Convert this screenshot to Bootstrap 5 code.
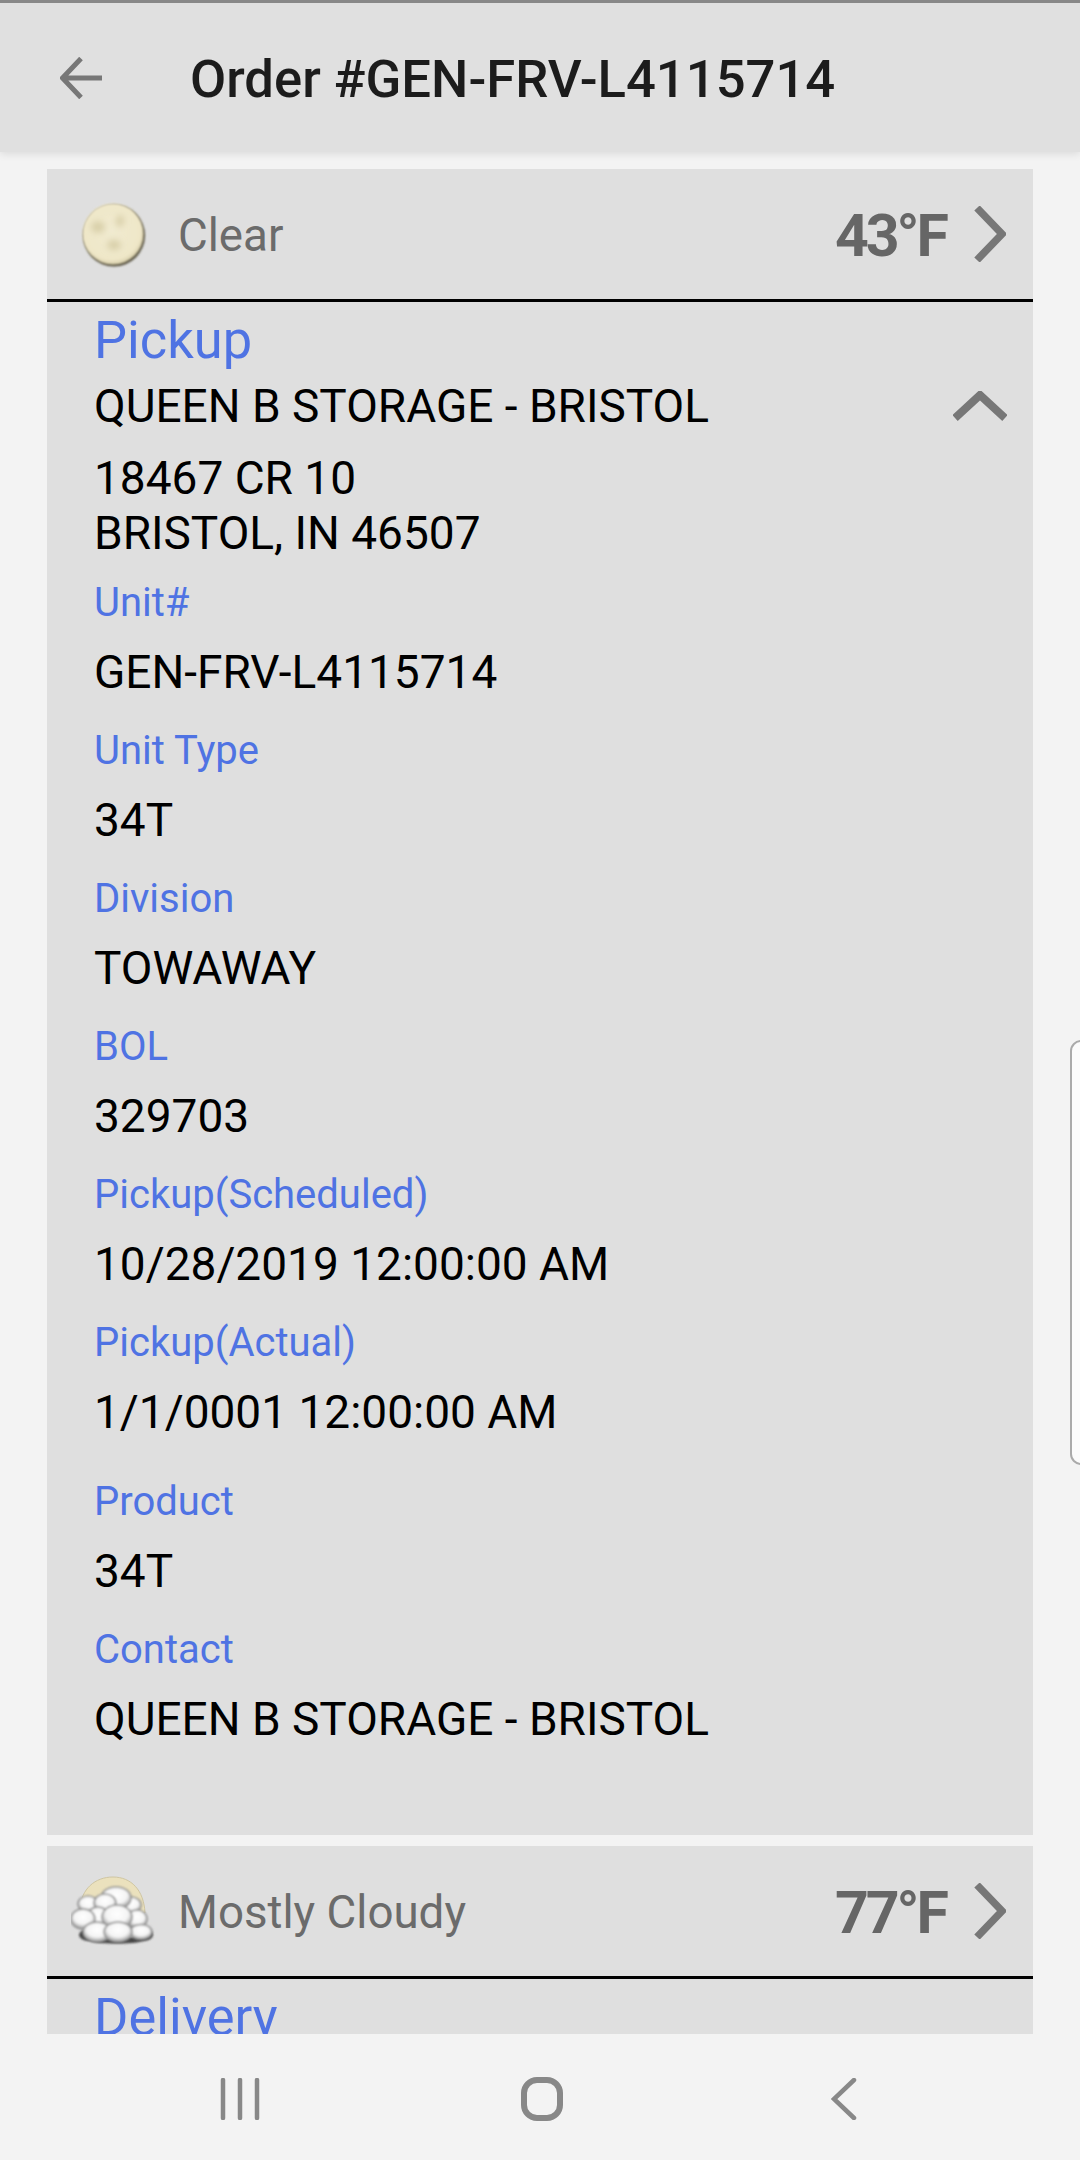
<!DOCTYPE html>
<html lang="en">
<head>
<meta charset="utf-8">
<title>Order</title>
<link href="https://cdn.jsdelivr.net/npm/bootstrap@5.3.0/dist/css/bootstrap.min.css" rel="stylesheet">
<style>
html,body{height:2160px;overflow:hidden;}
body{background:#f3f3f3;font-family:Roboto,"Liberation Sans",sans-serif;color:#000;}
.app-shell{height:2160px;}
.app-top{height:152px;background:#e0e0e0;border-top:3px solid #888;box-shadow:0 2px 8px rgba(0,0,0,.1);padding-left:60px;padding-top:3px;z-index:2;}
.app-top svg{margin-top:-3px;}
.app-title{font-size:52.6px;font-weight:500;color:#1c1c1c;margin:0 0 0 88px;line-height:1;}
.app-scroll{height:1882px;overflow:hidden;padding:17px 47px 0;}
.stop-card{background:#dfdfdf;margin-bottom:11px;}
.wx-row{height:133px;border-bottom:3px solid #000;padding-right:27px;}
.wx-icon{width:132px;flex:none;}
.wx-name{font-size:45.7px;color:#6b6b6b;line-height:1;margin-left:-1px;padding-top:3px;}
.wx-temp{font-size:59px;font-weight:700;color:#666;letter-spacing:-3px;line-height:1;margin-right:28px;padding-top:3px;}
.stop-body{padding:3px 26px 0 47px;height:1533px;}
.stop-title{font-size:52.4px;line-height:70px;color:#4f73e3;}
.stop-name{font-size:46px;line-height:60px;margin-top:1px;}
.stop-addr{font-size:46px;line-height:55px;margin-top:15px;}
.fld-label{font-size:40px;line-height:60px;color:#4f73e3;margin-top:10px;}
.fld-val{font-size:46px;line-height:78px;}
.fld-gap{margin-top:21px;}
.fld-first{margin-top:12px;}
.app-nav{height:126px;background:#f3f3f3;padding:4px 85px 0 89px;}
.side-handle{position:absolute;right:-12px;top:1040px;width:22px;height:425px;background:#fbfbfb;border:2px solid #aaa;border-radius:14px;}
</style>
</head>
<body>
<div class="app-shell d-flex flex-column position-relative">
  <header class="app-top d-flex align-items-center position-relative">
    <svg width="42" height="42" viewBox="0 0 42 42" fill="none" stroke="#777" stroke-width="5"><path d="M21 1.5 2.5 21 21 40.5M3 21h39"/></svg>
    <h1 class="app-title">Order #GEN-FRV-L4115714</h1>
  </header>
  <main class="app-scroll">
    <section class="stop-card">
      <div class="wx-row d-flex align-items-center">
        <div class="wx-icon d-flex justify-content-center">
          <svg width="70" height="70" viewBox="0 0 70 70">
            <defs>
              <radialGradient id="moon" cx=".48" cy=".45" r=".55"><stop offset="0" stop-color="#f1ead0"/><stop offset=".85" stop-color="#efe7c8"/><stop offset="1" stop-color="#d8cfab"/></radialGradient>
              <filter id="soft" x="-50%" y="-50%" width="200%" height="200%"><feGaussianBlur stdDeviation="3.2"/></filter>
              <filter id="soft1" x="-20%" y="-20%" width="140%" height="140%"><feGaussianBlur stdDeviation="1.2"/></filter>
              <filter id="soft2" x="-20%" y="-20%" width="140%" height="140%"><feGaussianBlur stdDeviation=".8"/></filter>
            </defs>
            <circle cx="36" cy="36.5" r="31" fill="#5c5745" filter="url(#soft1)"/>
            <circle cx="35" cy="35" r="30.5" fill="url(#moon)" filter="url(#soft2)"/>
            <g fill="#d8cfa9" filter="url(#soft)"><ellipse cx="20" cy="28" rx="7" ry="6"/><ellipse cx="42" cy="22" rx="4" ry="6"/><ellipse cx="36" cy="46" rx="7" ry="5"/></g>
          </svg>
        </div>
        <span class="wx-name flex-grow-1">Clear</span>
        <span class="wx-temp">43°F</span>
        <svg width="32" height="56" viewBox="0 0 32 56" fill="none" stroke="#777" stroke-width="7.5"><path d="M3 2 28 28 3 54"/></svg>
      </div>
      <div class="stop-body">
        <div class="stop-title">Pickup</div>
        <div class="d-flex justify-content-between align-items-center">
          <div class="stop-name">QUEEN B STORAGE - BRISTOL</div>
          <svg width="54" height="30" viewBox="0 0 54 30" fill="none" stroke="#777" stroke-width="8"><path d="M2 27 27 4l25 23"/></svg>
        </div>
        <div class="stop-addr">18467 CR 10<br>BRISTOL, IN 46507</div>
        <div class="fld-label fld-first">Unit#</div><div class="fld-val">GEN-FRV-L4115714</div>
        <div class="fld-label">Unit Type</div><div class="fld-val">34T</div>
        <div class="fld-label">Division</div><div class="fld-val">TOWAWAY</div>
        <div class="fld-label">BOL</div><div class="fld-val">329703</div>
        <div class="fld-label">Pickup(Scheduled)</div><div class="fld-val">10/28/2019 12:00:00 AM</div>
        <div class="fld-label">Pickup(Actual)</div><div class="fld-val">1/1/0001 12:00:00 AM</div>
        <div class="fld-label fld-gap">Product</div><div class="fld-val">34T</div>
        <div class="fld-label">Contact</div><div class="fld-val">QUEEN B STORAGE - BRISTOL</div>
      </div>
    </section>
    <section class="stop-card">
      <div class="wx-row d-flex align-items-center">
        <div class="wx-icon d-flex justify-content-center">
          <svg width="84" height="72" viewBox="0 0 84 72">
            <defs>
              <radialGradient id="puff" cx=".5" cy=".38" r=".62"><stop offset="0" stop-color="#fff"/><stop offset=".6" stop-color="#f4f4f4"/><stop offset="1" stop-color="#8f8f8f"/></radialGradient>
            </defs>
            <path d="M9 34C10 14 24 2 42 2s31 13 32 36z" fill="#ebe1bd" stroke="#cfc6a3" stroke-width="1"/>
            <g filter="url(#soft1)" fill="#444"><ellipse cx="46" cy="65" rx="28" ry="3.5"/><ellipse cx="72" cy="60" rx="10" ry="6"/><ellipse cx="18" cy="60" rx="10" ry="6"/></g>
            <g fill="url(#puff)" stroke="#8f8f8f" stroke-width="1.5" filter="url(#soft2)">
              <ellipse cx="17" cy="29" rx="10" ry="8"/><ellipse cx="60" cy="30" rx="10" ry="8"/>
              <ellipse cx="45" cy="23" rx="15" ry="11"/><ellipse cx="34" cy="28" rx="11" ry="9"/>
              <ellipse cx="66" cy="44" rx="10" ry="9"/>
              <ellipse cx="27" cy="42" rx="11" ry="10"/><ellipse cx="46" cy="42" rx="15" ry="12"/>
              <ellipse cx="12" cy="44" rx="12" ry="10"/>
              <ellipse cx="26" cy="57" rx="14" ry="10"/><ellipse cx="70" cy="57" rx="11" ry="7.5"/><ellipse cx="47" cy="57" rx="14" ry="10"/>
            </g>
          </svg>
        </div>
        <span class="wx-name flex-grow-1">Mostly Cloudy</span>
        <span class="wx-temp">77°F</span>
        <svg width="32" height="56" viewBox="0 0 32 56" fill="none" stroke="#777" stroke-width="7.5"><path d="M3 2 28 28 3 54"/></svg>
      </div>
      <div class="stop-body">
        <div class="stop-title">Delivery</div>
      </div>
    </section>
  </main>
  <nav class="app-nav row g-0 align-items-center">
    <div class="col-4 d-flex justify-content-center">
      <svg width="40" height="42" viewBox="0 0 40 42" fill="none" stroke="#888" stroke-width="4.5" stroke-linecap="round"><path d="M3 2v38M20 2v38M37 2v38"/></svg>
    </div>
    <div class="col-4 d-flex justify-content-center">
      <svg width="42" height="44" viewBox="0 0 42 44" fill="none" stroke="#888" stroke-width="6"><rect x="3" y="3" width="36" height="38" rx="13"/></svg>
    </div>
    <div class="col-4 d-flex justify-content-center">
      <svg width="26" height="42" viewBox="0 0 26 42" fill="none" stroke="#888" stroke-width="4.5" stroke-linecap="round"><path d="M23 2 3 21l20 19"/></svg>
    </div>
  </nav>
  <div class="side-handle"></div>
</div>
<script src="https://cdn.jsdelivr.net/npm/bootstrap@5.3.0/dist/js/bootstrap.bundle.min.js"></script>
</body>
</html>
